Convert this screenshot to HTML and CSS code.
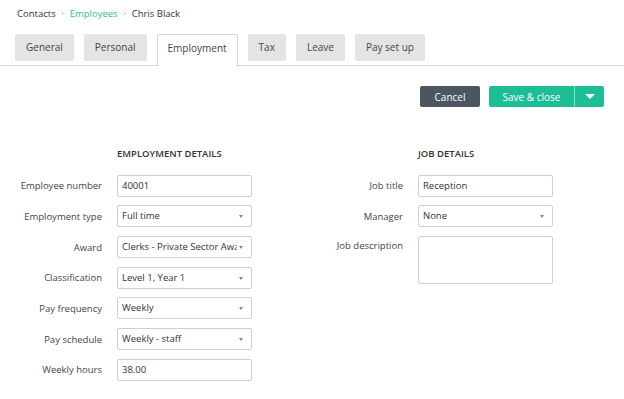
FILE: index.html
```html
<!DOCTYPE html>
<html>
<head>
  <meta charset="UTF-8">
  <link rel="stylesheet" href="styles.css">
</head>
<body>
  <div class="breadcrumb">
    <span>Contacts</span>
    <span class="sep">&gt;</span>
    <span class="link">Employees</span>
    <span class="sep">&gt;</span>
    <span>Chris Black</span>
  </div>

  <div class="tabs">
    <div class="tab">General</div>
    <div class="tab">Personal</div>
    <div class="tab active">Employment</div>
    <div class="tab">Tax</div>
    <div class="tab">Leave</div>
    <div class="tab">Pay set up</div>
  </div>

  <div class="actions">
    <button class="btn cancel">Cancel</button>
    <div class="split">
      <button class="btn save">Save &amp; close</button>
      <button class="btn caret"><span class="arrow-down"></span></button>
    </div>
  </div>

  <div class="form">
    <div class="section">
      <h3 class="heading">EMPLOYMENT DETAILS</h3>
      <label>Employee number</label>
      <div class="field">40001</div>
      <label>Employment type</label>
      <div class="field select">Full time</div>
      <label>Award</label>
      <div class="field select"><span class="clip">Clerks - Private Sector Awai</span></div>
      <label>Classification</label>
      <div class="field select">Level 1, Year 1</div>
      <label>Pay frequency</label>
      <div class="field select">Weekly</div>
      <label>Pay schedule</label>
      <div class="field select">Weekly - staff</div>
      <label>Weekly hours</label>
      <div class="field">38.00</div>
    </div>

    <div class="section">
      <h3 class="heading">JOB DETAILS</h3>
      <label>Job title</label>
      <div class="field">Reception</div>
      <label>Manager</label>
      <div class="field select">None</div>
      <label class="top">Job description</label>
      <div class="field area"></div>
    </div>
  </div>
</body>
</html>
```

FILE: styles.css
```css
body {
  margin: 0;
  width: 624px;
  height: 399px;
  background: #fff;
  font-family: "Open Sans", "Liberation Sans", sans-serif;
  font-size: 9.5px;
  color: #333;
  overflow: hidden;
}
.breadcrumb {
  padding: 6px 0 0 17px;
  height: 15px;
  line-height: 15px;
  display: flex;
  gap: 5px;
}
.breadcrumb .sep {
  color: #bbb;
  font-size: 7px;
}
.breadcrumb .link {
  color: #2dbd9b;
}
.tabs {
  margin-top: 13px;
  padding-left: 15px;
  height: 31px;
  display: flex;
  gap: 10px;
  border-bottom: 1px solid #d6d6d6;
}
.tab {
  height: 27px;
  line-height: 27px;
  padding: 0 11px;
  background: #e4e4e4;
  border-radius: 2px;
  color: #444;
  font-size: 10px;
}
.tab.active {
  background: #fff;
  border: 1px solid #d6d6d6;
  border-bottom: none;
  height: 31px;
  margin-bottom: -1px;
  padding: 0 10px;
}
.actions {
  display: flex;
  justify-content: flex-end;
  gap: 9px;
  padding: 20px 20px 0 0;
}
.btn {
  border: none;
  height: 21px;
  border-radius: 2px;
  font-family: inherit;
  font-size: 10px;
  color: #fff;
  padding: 0;
}
.cancel {
  width: 60px;
  background: #4b5661;
}
.split {
  display: flex;
}
.save {
  width: 86px;
  background: #1ebe95;
  border-radius: 2px 0 0 2px;
  border-right: 1px solid #8fdcc6;
}
.caret {
  width: 29px;
  background: #1ebe95;
  border-radius: 0 2px 2px 0;
  display: flex;
  align-items: center;
  justify-content: center;
}
.arrow-down {
  width: 0;
  height: 0;
  border-left: 5px solid transparent;
  border-right: 5px solid transparent;
  border-top: 5px solid #fff;
}
.form {
  display: flex;
  gap: 49px;
  padding-top: 40px;
}
.section {
  display: grid;
  grid-template-columns: 102px 135px;
  column-gap: 15px;
  row-gap: 8.7px;
  align-content: start;
  align-items: center;
}
.heading {
  grid-column: 2;
  margin: 0 0 6px;
  font-size: 9.5px;
  font-weight: 600;
  color: #333;
  line-height: 13px;
}
label {
  text-align: right;
  color: #444;
}
label.top {
  align-self: start;
  padding-top: 3px;
}
.field {
  box-sizing: border-box;
  height: 22px;
  line-height: 20px;
  border: 1px solid #cfcfcf;
  border-radius: 2px;
  padding: 0 18px 0 4px;
  position: relative;
  color: #333;
  white-space: nowrap;
  overflow: hidden;
}
.field.select::after {
  content: "";
  position: absolute;
  right: 8px;
  top: 9px;
  border-left: 2.5px solid transparent;
  border-right: 2.5px solid transparent;
  border-top: 3px solid #888;
}
.clip {
  display: block;
  overflow: hidden;
  margin-right: -4px;
}
.field.area {
  height: 48px;
}
```
